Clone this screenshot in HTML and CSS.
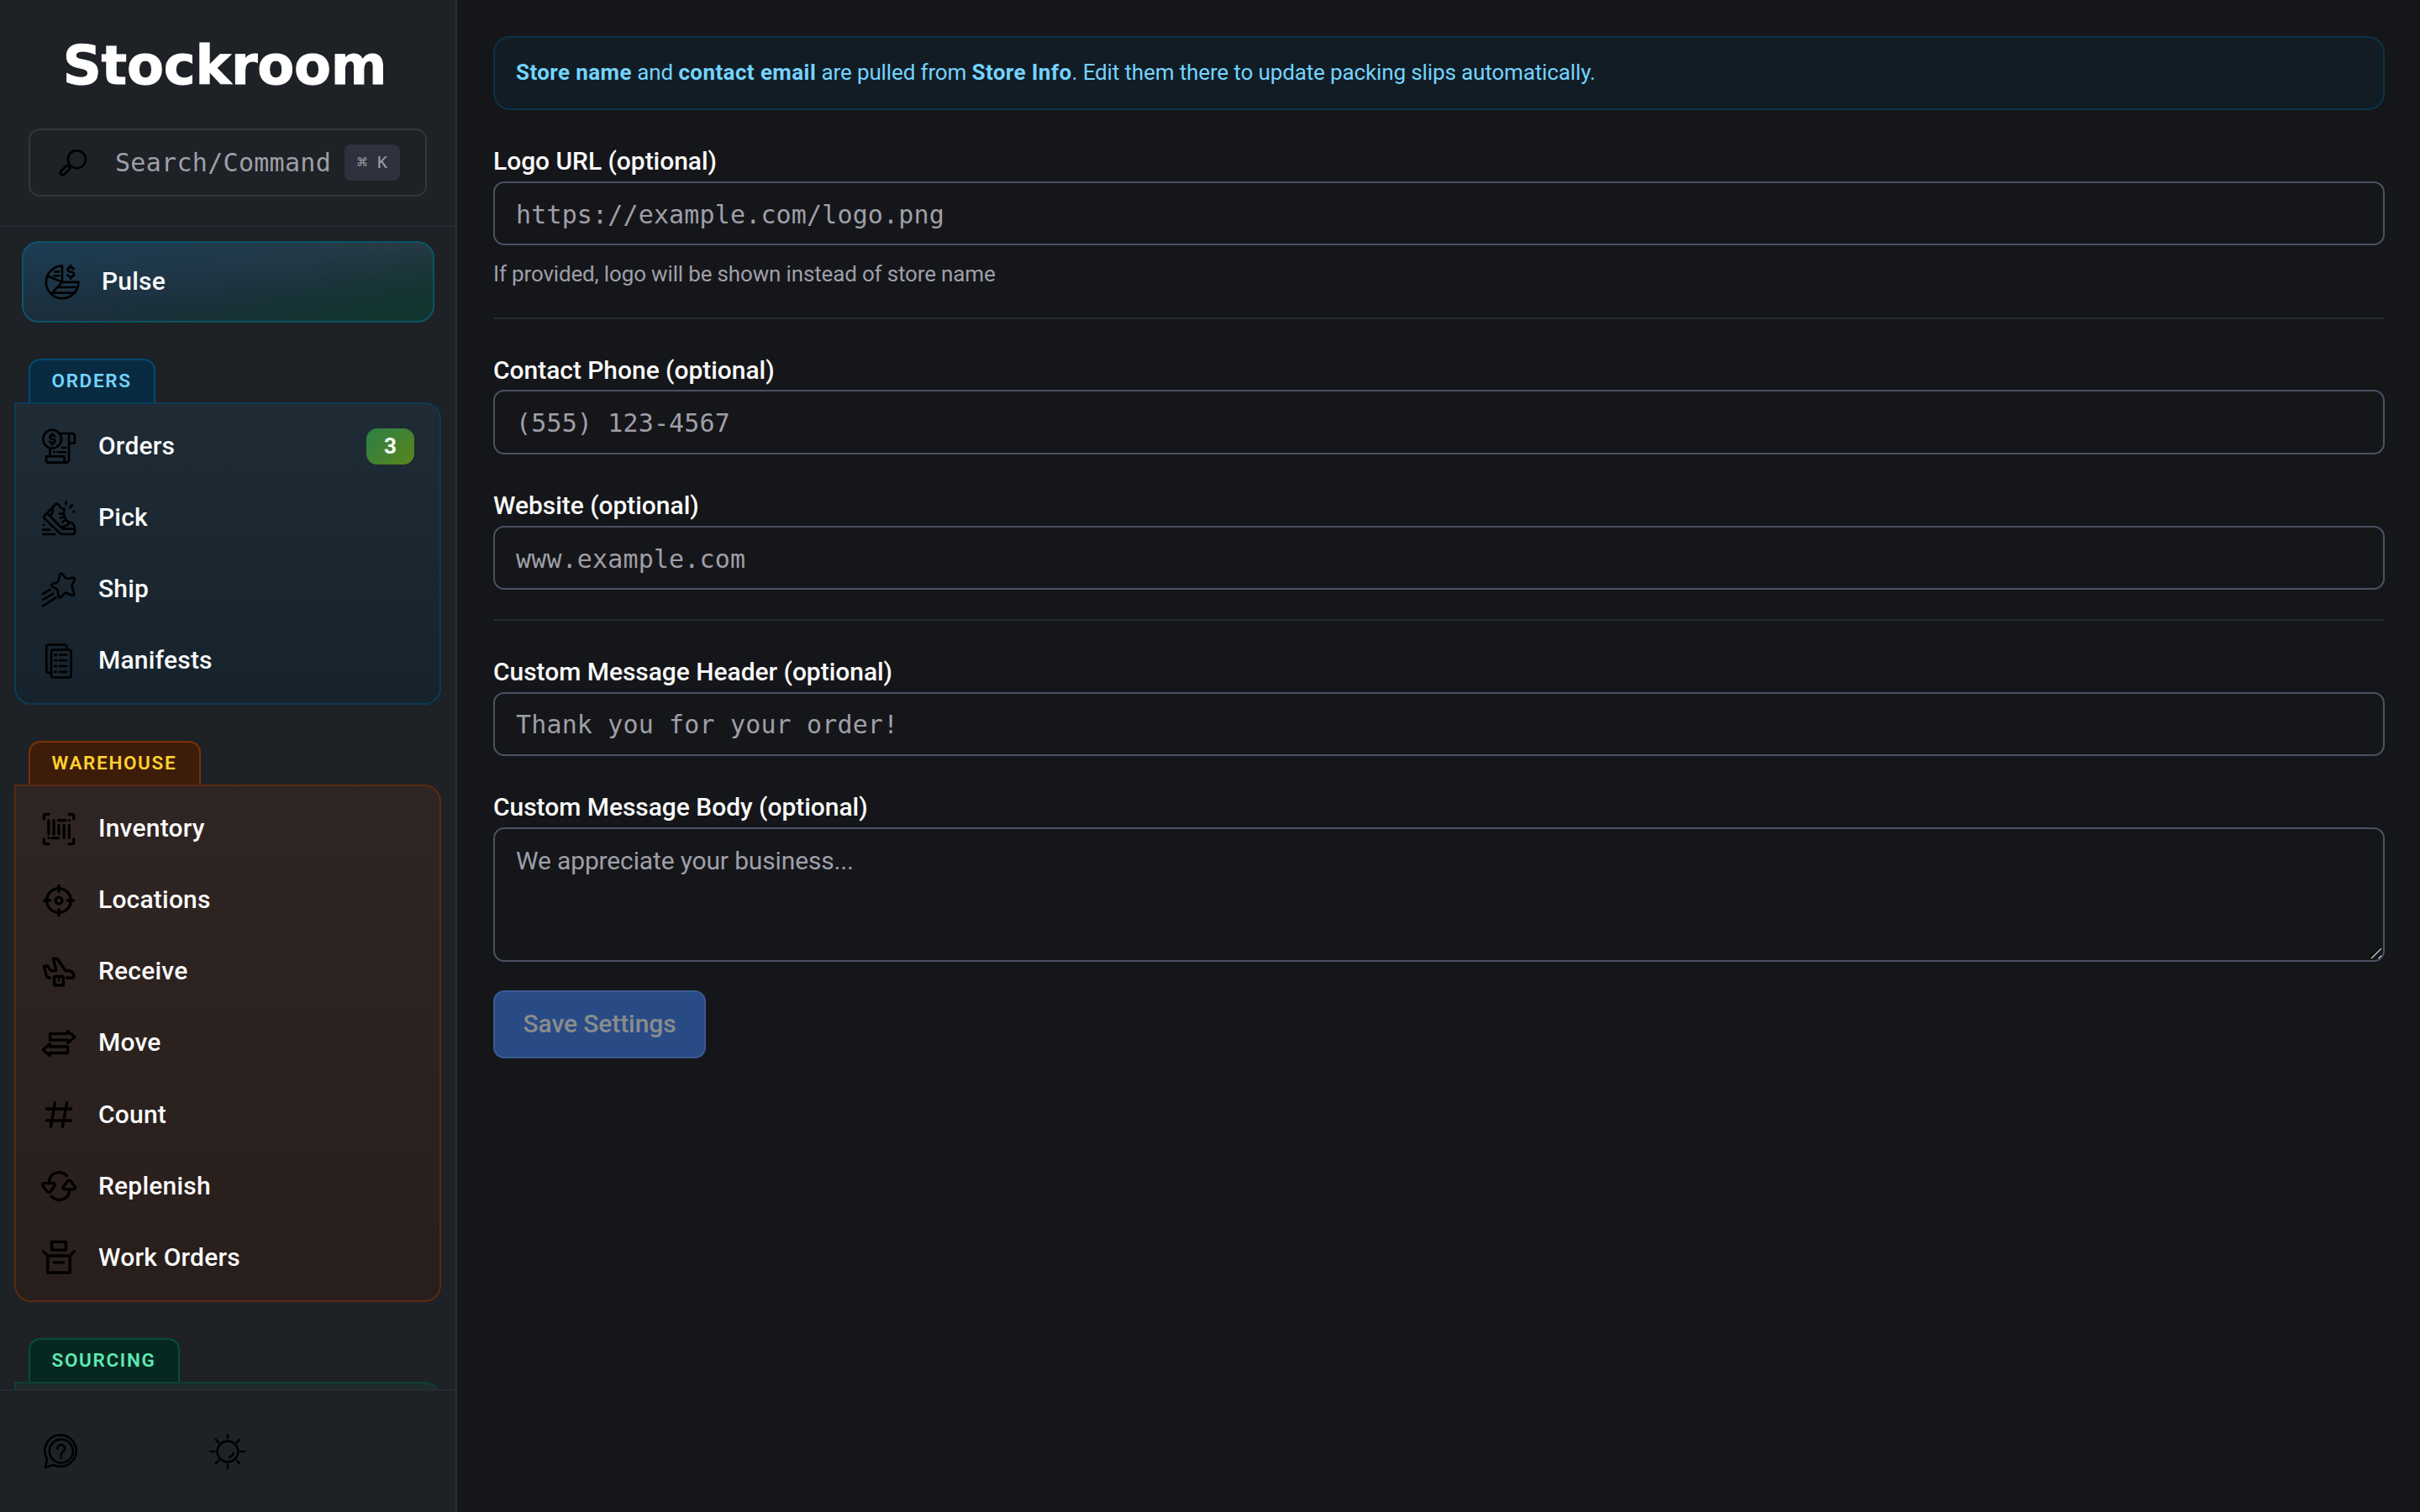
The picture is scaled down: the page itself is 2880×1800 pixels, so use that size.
FILE: index.html
```html
<!DOCTYPE html>
<html lang="en">
<head>
  <meta charset="UTF-8" />
  <meta name="viewport" content="width=device-width, initial-scale=1" />
  <title>Stockroom</title>
  <link rel="stylesheet" href="styles.css">
</head>
<body>

  <!-- Sidebar -->
  <aside class="sidebar">
    <div class="sidebar-header">
      <h1 class="brand">Stockroom</h1>
      <div class="search">
        <svg class="icon" viewBox="0 0 44 44"><circle cx="26.4" cy="17.7" r="10.6"/><rect x="-2.7" y="0" width="5.4" height="13.5" rx="2.4" transform="translate(17.2 26) rotate(45)"/><path d="M18.6 25.4l-1.2 1.2"/></svg>
        <span class="search-text">Search/Command</span>
        <kbd class="kbd">⌘ K</kbd>
      </div>
    </div>

    <nav class="nav">
      <a class="nav-item pulse">
        <svg class="icon" viewBox="0 0 44 44"><path d="M22 2.6A19.3 19.3 0 1 0 41.4 21.9H22z"/><path d="M22 21.9L4.6 14.5M22 21.9L8.8 36M17 28h23.4M11.5 34.6h26M13.2 9.4h5.2M12.6 14.2h5.8"/><path d="M35.8 6.2c-.8-1.3-2-1.8-3.6-1.8-2.2 0-3.6 1-3.6 2.7 0 3.9 7.5 1.6 7.5 5.4 0 1.8-1.6 2.8-3.8 2.8-1.8 0-3.2-.7-3.9-2M32.2 2v2.4M32.2 15.3v2.4"/></svg>
        <span>Pulse</span>
      </a>

      <section class="group group-orders">
        <h2 class="tab">ORDERS</h2>
        <div class="panel">
          <a class="nav-item">
            <svg class="icon" viewBox="0 0 44 44"><circle cx="14.1" cy="13.7" r="10.9"/><path d="M17.2 10.6c-.6-1-1.6-1.5-3-1.5-1.8 0-3 .8-3 2.2 0 3.3 6.2 1.4 6.2 4.6 0 1.5-1.3 2.4-3.2 2.4-1.5 0-2.6-.6-3.2-1.7M14.2 7.2v1.9M14.2 18.3v2.2"/><path d="M24 7h14.2c2 0 2.6 1.4 2.6 3.4V18.600h-6.800M34 38V10.200C34 8.200 35 7 37 7M11.400 26v8M34 38c0 2.600-1 3.600-3 3.600H9.500C7.800 41.600 7 41 7 39.500V34.200h21.500v5c0 1.600.8 2.400 2.500 2.400M26.200 24h3.600M16.400 29.200h.4M20.500 29.200h9.300"/></svg>
            <span>Orders</span>
            <span class="badge">3</span>
          </a>
          <a class="nav-item">
            <svg class="icon" viewBox="0 0 44 44"><path d="M4.600 19.400L18 5.500Q20 3.600 21.800 6 24.500 11 28.500 10.800 26.500 19 31.500 25 33.500 27 37 27.200 41 29.500 41 34v4Q41 41 38 41H26.500Q24.500 41 22.800 39.400L5 22.400Q3.600 20.700 4.600 19.400z"/><path d="M8.500 16l16 16.800Q26.200 34.600 28.500 34.600H41M14 9.800Q16.500 14.500 12 18.600M23 16.600h4M24 21.400l4.200-.9M26.500 26.500l3.500-2.700M24 32q7 .8 10.500-4.600M30.600 2.400v2.800M35 9.400l3-3.200M39.300 14.200h1M3.800 30h.6M3 35.600h8.500M3 41h14.500"/></svg>
            <span>Pick</span>
          </a>
          <a class="nav-item">
            <svg class="icon" viewBox="0 0 44 44"><path d="M23.300 3.600Q24.700 1.700 26.300 3.500L30 8Q31 9 32.400 8.700L38.500 7.800Q41.600 7.800 40.700 10.500L37.800 17Q37.300 18.300 38 19.500L40.200 26.600Q40.400 29.300 37.400 28.700L31.500 26Q30 25.400 29 26.500L24.300 31Q21.800 32.600 21.400 29.800L20.800 23.700Q20.600 22.300 19.400 21.400L14 18Q12.200 16 14.700 14.900L20 13.200Q21.400 12.700 21.600 11.300z"/><path d="M3 27l9-5.200M3 34l12-7.200M3 41.400L18.400 31.600"/></svg>
            <span>Ship</span>
          </a>
          <a class="nav-item">
            <svg class="icon" viewBox="0 0 44 44"><path d="M31.400 8V5Q31.400 2.500 29 2.500H9.800Q7.300 2.500 7.300 5v28.500Q7.300 36 9.800 36H12.500"/><rect x="13" y="8.500" width="23.600" height="33" rx="2.500"/><path d="M17.300 14.500h1.600M22.800 14.500h8.500M17.300 21.200h1.600M22.800 21.200h8.500M17.300 28h1.600M22.800 28h8.500M17.300 34.800h1.600M22.800 34.800h8.500"/></svg>
            <span>Manifests</span>
          </a>
        </div>
      </section>

      <section class="group group-warehouse">
        <h2 class="tab">WAREHOUSE</h2>
        <div class="panel">
          <a class="nav-item">
            <svg class="icon bold" viewBox="0 0 44 44"><path d="M4.300 10V6.500Q4.300 4.300 6.500 4.300H10M34 4.300h3.500Q39.800 4.300 39.800 6.500V10M4.300 34v3.500Q4.300 39.700 6.500 39.700H10M34 39.700h3.500Q39.800 39.700 39.800 37.500V34M9.900 11.600V28M16 11.600V28M22 17.400v10M28.200 17.400v15M34.400 17.400v15M21.600 11.600H30M34.200 11.600h.3M13.900 32.600h7.800M9.700 32.600h.3"/></svg>
            <span>Inventory</span>
          </a>
          <a class="nav-item">
            <svg class="icon bold" viewBox="0 0 44 44"><circle cx="22" cy="22" r="14.400"/><circle cx="22" cy="22" r="3.900"/><path d="M22 4.300v7M22 32.700v7M4.600 22h7M32.400 22h7"/></svg>
            <span>Locations</span>
          </a>
          <a class="nav-item">
            <svg class="icon bold" viewBox="0 0 44 44"><path d="M11.500 29.200Q7.800 29.200 7 25.800L4.500 15.400 8.200 15Q9 15.100 9.500 16L11.800 19.800Q12.300 20.700 13.300 20.700H17.800Q19.200 20.700 18.800 19.300L15.200 6Q19.500 5.200 21 7.500L29.800 20.500H32.500Q39.800 21 40 27 39.700 29.200 37.500 29.200H31.500"/><rect x="16.600" y="27.500" width="10.800" height="10.500" rx="1"/><path class="thin" d="M22 29.500v3"/></svg>
            <span>Receive</span>
          </a>
          <a class="nav-item">
            <svg class="icon bold" viewBox="0 0 44 44"><path d="M11.500 10.700H32.600V7.500L41 14.500 32.600 21.400V18.200H11.500zM32.500 26H11.400V22.800L3.200 29.700 11.400 36.700V33.500H32.500z"/></svg>
            <span>Move</span>
          </a>
          <a class="nav-item">
            <svg class="icon bold" viewBox="0 0 44 44"><path d="M7.300 15H36.700M7.300 29H36.700M17.500 7.800L12.400 36.400M31.600 7.800L26.500 36.400"/></svg>
            <span>Count</span>
          </a>
          <a class="nav-item">
            <svg class="icon bold" viewBox="0 0 44 44"><path d="M4.300 18.700H15.500Q18.500 19 17 21.800L12 28.500Q10 30.700 8 28.500L3 21.800Q1.400 19.300 4.300 18.700zM10.500 17.500C11 5 24.500 2.500 31.400 9.700M28.700 25.800H39.700Q42.700 25.200 41 22.600L36.200 16Q34.300 13.800 32.500 16L27.400 22.600Q25.700 25.200 28.700 25.800zM35 27C33.500 38.500 20.500 42 13 34.200"/></svg>
            <span>Replenish</span>
          </a>
          <a class="nav-item">
            <svg class="icon bold" viewBox="0 0 44 44"><path d="M13.500 3.300H30.400V13.200H13.500zM8.800 20H35.200V40H8.800zM3.600 14.800L8.800 20M40.400 14.800L35.200 20M16.500 27.800h11"/></svg>
            <span>Work Orders</span>
          </a>
        </div>
      </section>

      <section class="group group-sourcing">
        <h2 class="tab">SOURCING</h2>
        <div class="panel">
          <a class="nav-item"></a>
        </div>
      </section>
    </nav>

    <div class="sidebar-footer">
      <svg class="icon" viewBox="0 0 44 44"><path d="M2.800 40.800L5 30.800A18.700 18.700 0 1 1 13 38z"/><circle cx="21.800" cy="21.500" r="14"/><path d="M17.400 18.800c-.2-6.200 9-6.200 8.900-.4 0 3.500-4.500 3.400-4.500 7.400M21.800 28.600v1.200"/></svg>
      <svg class="icon" viewBox="0 0 44 44"><circle cx="22" cy="22" r="12.400"/><path d="M22 2v4M22 38v4M2 22h4.500M37.500 22h4.500M7.900 7.900l3 3M36.100 7.900l-3 3M7.900 36.100l3-3M36.100 36.100l-3-3M28.700 24q-1 3.600-4.600 4.800"/></svg>
    </div>
  </aside>

  <!-- Packing slip settings -->
  <main class="content">
    <div class="notice"><b>Store name</b> and <b>contact email</b> are pulled from <b>Store Info</b>. Edit them there to update packing slips automatically.</div>

    <div class="field">
      <label for="logo">Logo URL (optional)</label>
      <input id="logo" type="text" placeholder="https://example.com/logo.png">
      <p class="hint">If provided, logo will be shown instead of store name</p>
    </div>

    <hr>

    <div class="field">
      <label for="phone">Contact Phone (optional)</label>
      <input id="phone" type="text" placeholder="(555) 123-4567">
    </div>
    <div class="field">
      <label for="website">Website (optional)</label>
      <input id="website" type="text" placeholder="www.example.com">
    </div>

    <hr>

    <div class="field">
      <label for="msg-header">Custom Message Header (optional)</label>
      <input id="msg-header" type="text" placeholder="Thank you for your order!">
    </div>
    <div class="field area">
      <label for="msg-body">Custom Message Body (optional)</label>
      <textarea id="msg-body" placeholder="We appreciate your business..."></textarea>
      <svg class="grip" viewBox="0 0 16 16"><path class="grip-shade" d="M1 13L13 1M9.500 13.500L13.500 9.500"/><path d="M2 14L14 2M10.500 14L14 10.500"/></svg>
    </div>

    <button class="save" disabled>Save Settings</button>
  </main>

</body>
</html>
```
FILE: styles.css
```css
* {
  box-sizing: border-box;
}

body {
  margin: 0;
  height: 100vh;
  display: flex;
  overflow: hidden;
  background: #151619;
  color: #fafafa;
  font-family: Roboto, "Liberation Sans", sans-serif;
  font-size: 30px;
}

.icon {
  width: 44px;
  height: 44px;
  flex: none;
  fill: none;
  stroke: #000;
  stroke-width: 2.6;
  stroke-linecap: round;
  stroke-linejoin: round;
}
.icon.bold {
  stroke-width: 3.3;
}
.icon .thin {
  stroke-width: 2;
}

/* ---------- Sidebar ---------- */
.sidebar {
  width: 544px;
  flex: none;
  display: flex;
  flex-direction: column;
  background: #1e2125;
  border-right: 2px solid #2b2e34;
}

.sidebar-header {
  height: 270px;
  flex: none;
  padding: 35px 34px 0;
  border-bottom: 2px solid #272a32;
}

.brand {
  margin: 0 0 32px;
  padding-right: 7px;
  height: 86px;
  line-height: 86px;
  text-align: center;
  font-family: "DejaVu Sans", sans-serif;
  font-weight: bold;
  font-size: 64px;
  letter-spacing: -0.2px;
  color: #fff;
  -webkit-text-stroke: 1px #fff;
}

.search {
  height: 81px;
  display: flex;
  align-items: center;
  padding: 0 30px 0 29px;
  border: 2px solid #34363b;
  border-radius: 13px;
}
.search-text {
  margin-left: 28px;
  flex: 1;
  white-space: nowrap;
  font-family: "DejaVu Sans Mono", monospace;
  font-size: 30px;
  letter-spacing: 0.3px;
  color: #9f9fa9;
}
.kbd {
  width: 66px;
  height: 43px;
  flex: none;
  line-height: 42px;
  text-align: center;
  white-space: nowrap;
  font-family: "DejaVu Sans Mono", monospace;
  font-size: 20px;
  color: #9f9fa9;
  background: #2f323e;
  border-radius: 8px;
}

.nav {
  flex: 1;
  min-height: 0;
  overflow: hidden;
  padding: 17px 17px 0;
}

.nav-item {
  height: 85.1px;
  display: flex;
  align-items: center;
  gap: 25px;
  padding: 0 22px 0 21px;
  font-weight: 500;
  letter-spacing: 0.2px;
}
.nav-item span {
  padding-bottom: 2px;
}

.pulse {
  height: 97px;
  margin: 0 8px 0 9px;
  padding: 0 24px;
  border: 2px solid #0b5467;
  border-radius: 20px;
  background:
    linear-gradient(168deg, rgba(16, 53, 46, 0) 48%, #10352e 94%),
    linear-gradient(to bottom, rgba(27, 45, 58, 0), #1b2d3a),
    linear-gradient(to right, #1c3d54, #273b45);
}

.group {
  margin-top: 42.9px;
}
.tab {
  width: max-content;
  height: 52px;
  margin: 0 0 0 17px;
  padding: 0 26.5px 0 25.5px;
  border: 2px solid;
  border-bottom: 0;
  border-radius: 14px 14px 0 0;
  line-height: 49px;
  font-size: 22.5px;
  font-weight: 600;
  letter-spacing: 1.65px;
}
.panel {
  padding: 8px;
  border: 2px solid;
  border-radius: 0 20px 20px 20px;
}

.group-orders .tab {
  color: #74d4ff;
  background: #092b41;
  border-color: #044970;
}
.group-orders .panel {
  background: linear-gradient(#1f2b35, #16232d);
  border-color: #0b3b57;
}
.group-warehouse .tab {
  color: #ffd230;
  background: #3e1c0a;
  border-color: #7a3205;
}
.group-warehouse .panel {
  background: linear-gradient(#2f2523, #281e1b);
  border-color: #582a11;
}
.group-sourcing .tab {
  color: #5ee9b5;
  background: #062820;
  border-color: #054f3b;
}
.group-sourcing .panel {
  background: #1d2b2b;
  border-color: #0e4035;
}

.nav-item .badge {
  width: 57px;
  height: 43px;
  margin-left: auto;
  padding: 0;
  line-height: 43px;
  text-align: center;
  font-size: 26px;
  font-weight: 700;
  color: #fff;
  border-radius: 13px;
  background: linear-gradient(135deg, #2a8048, #5a851a);
}

.sidebar-footer {
  height: 146px;
  flex: none;
  display: flex;
  align-items: center;
  gap: 154px;
  padding-left: 51px;
  border-top: 2px solid #272a32;
}

/* ---------- Settings form ---------- */
.content {
  flex: 1;
  display: flex;
  flex-direction: column;
  align-items: stretch;
  gap: 34.3px;
  padding: 43px 42px 0 43px;
}

.notice {
  height: 88px;
  padding: 0 25px;
  line-height: 83px;
  font-size: 26px;
  letter-spacing: -0.13px;
  color: #74d4ff;
  background: #111c24;
  border: 2px solid #0c334a;
  border-radius: 20px;
}
.notice b {
  font-weight: 700;
  letter-spacing: 0.4px;
}

.field {
  display: flex;
  flex-direction: column;
}
.field label {
  height: 50.5px;
  padding-top: 2px;
  line-height: 50px;
  font-weight: 500;
  letter-spacing: -0.04px;
}

input,
textarea {
  display: block;
  width: 100%;
  height: 76.6px;
  margin: 0;
  padding: 2px 25px 0;
  background: transparent;
  border: 2px solid #4b5263;
  border-radius: 13px;
  outline: none;
  font-family: "DejaVu Sans Mono", monospace;
  font-size: 30px;
  letter-spacing: 0.15px;
  color: #fafafa;
}
textarea {
  height: 160px;
  padding: 15px 25px;
  resize: none;
  line-height: 45px;
  font-family: Roboto, "Liberation Sans", sans-serif;
  letter-spacing: -0.15px;
}
::placeholder {
  color: #9f9fa9;
  opacity: 1;
}

.hint {
  margin: 17px 0 0;
  line-height: 34px;
  font-size: 26px;
  letter-spacing: -0.16px;
  color: #9f9fa9;
}

hr {
  width: 100%;
  margin: 0;
  border: 0;
  border-top: 2px solid #262c33;
}

.area {
  position: relative;
}
.grip {
  position: absolute;
  right: 2px;
  bottom: 2px;
  width: 16px;
  height: 16px;
  fill: none;
  stroke: #b5b5b5;
  stroke-width: 1.6;
}
.grip-shade {
  stroke: #000;
}

.save {
  align-self: flex-start;
  width: 253px;
  height: 81px;
  padding: 0 0 2px;
  font-family: inherit;
  font-size: 30px;
  font-weight: 500;
  letter-spacing: -0.1px;
  color: #8a8b8d;
  background: #284b86;
  border: 2px solid #3a5a8f;
  border-radius: 13px;
}
```
